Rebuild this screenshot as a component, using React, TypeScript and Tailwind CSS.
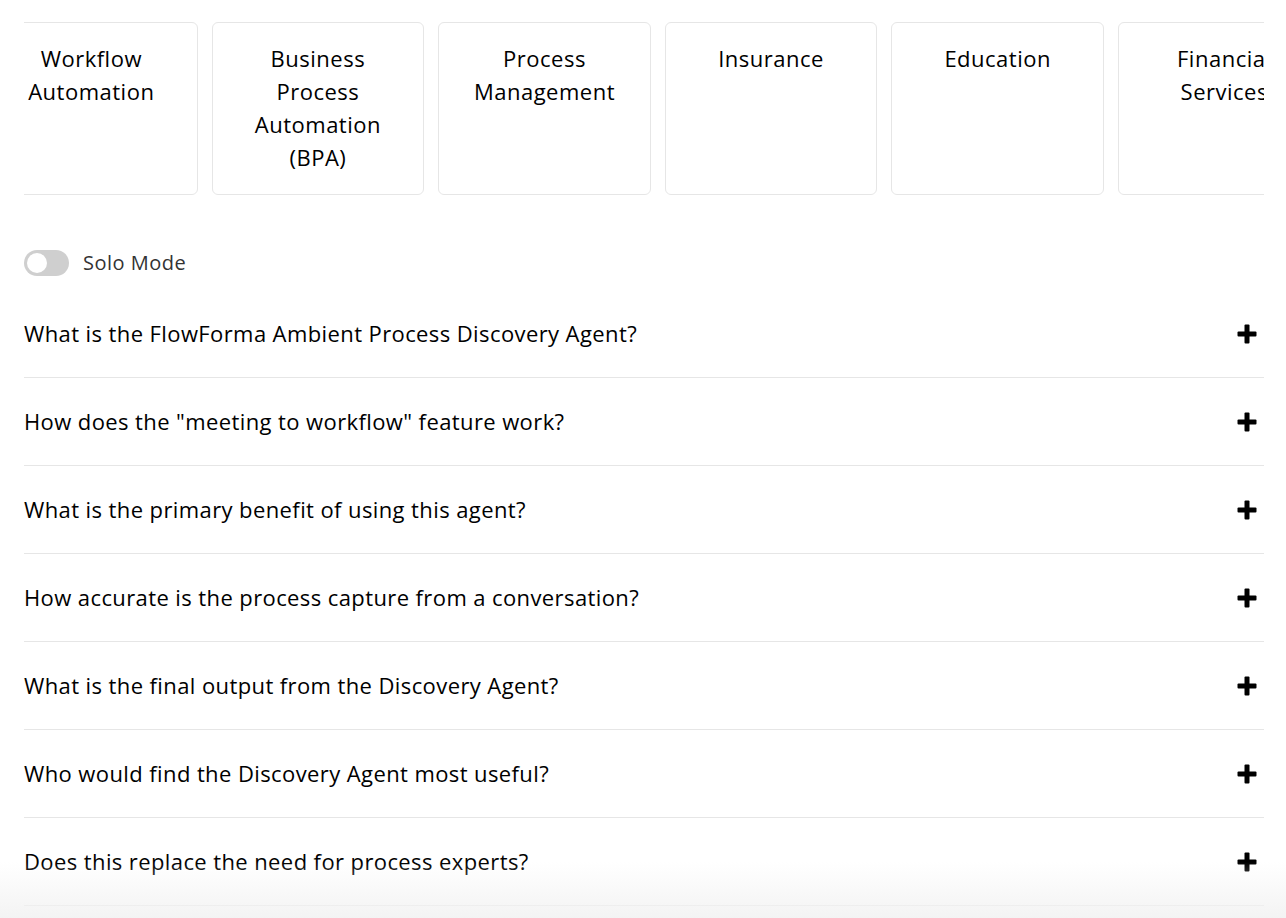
import React from "react";

const cards = [
  "Workflow Automation",
  "Business Process Automation (BPA)",
  "Process Management",
  "Insurance",
  "Education",
  "Financial Services",
];

const questions = [
  "What is the FlowForma Ambient Process Discovery Agent?",
  'How does the "meeting to workflow" feature work?',
  "What is the primary benefit of using this agent?",
  "How accurate is the process capture from a conversation?",
  "What is the final output from the Discovery Agent?",
  "Who would find the Discovery Agent most useful?",
  "Does this replace the need for process experts?",
];

function Plus() {
  return (
    <svg width="20" height="20" viewBox="0 0 20 20" className="shrink-0">
      <rect x="7.5" y="0.5" width="5" height="19" rx="1" fill="#000" />
      <rect x="0.5" y="7.5" width="19" height="5" rx="1" fill="#000" />
    </svg>
  );
}

export default function App() {
  return (
    <div
      className="relative h-[918px] overflow-hidden bg-white pl-6 pr-[22px] text-black"
      style={{ fontFamily: "'Open Sans', Lato, sans-serif" }}
    >
      <div className="overflow-hidden pt-[22px]">
        <div className="-ml-[39px] flex gap-[14px]">
          {cards.map((c) => (
            <div
              key={c}
              className="flex h-[173px] w-[212.6px] shrink-0 justify-center rounded-md border border-[#e6e6e6] px-4 pt-[19px] text-center text-[22px] leading-[33px] tracking-[0.5px]"
            >
              <span className="w-[150px]">{c}</span>
            </div>
          ))}
        </div>
      </div>

      <div className="mt-[55px] flex h-[26px] items-center gap-[14px]">
        <div className="flex h-[26px] w-[45px] items-center rounded-full bg-[#cfcfcf] px-[3px]">
          <div className="h-[20px] w-[20px] rounded-full bg-white" />
        </div>
        <span className="text-[20px] tracking-[0.5px] text-[#333]">Solo Mode</span>
      </div>

      <div className="mt-[14px]">
        {questions.map((q) => (
          <div
            key={q}
            className="flex h-[88px] items-center justify-between border-b border-[#e6e6e6] pr-[7px]"
          >
            <span className="text-[22px] tracking-[0.4px]">{q}</span>
            <Plus />
          </div>
        ))}
      </div>

      <div className="pointer-events-none absolute bottom-0 left-0 h-[56px] w-full bg-gradient-to-b from-white/0 to-[#f2f2f2]/90" />
    </div>
  );
}
